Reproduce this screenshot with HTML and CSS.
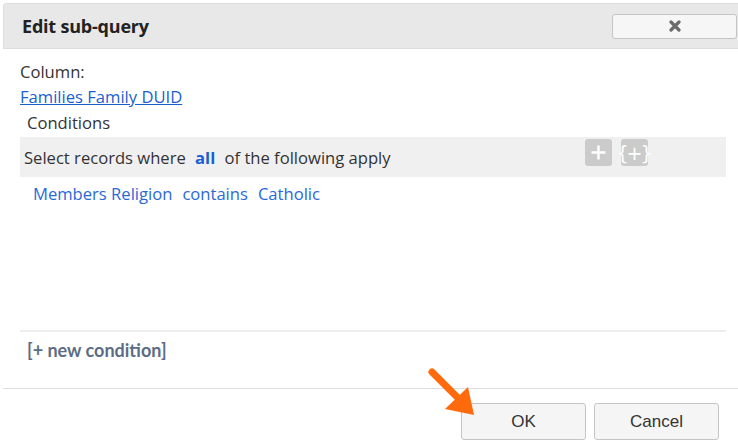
FILE: index.html
```html
<!DOCTYPE html>
<html>
<head>
<meta charset="utf-8">
<link rel="stylesheet" href="styles.css">
</head>
<body>
<div class="dialog">
  <div class="titlebar">
    <span class="title">Edit sub-query</span>
    <button class="close-btn" aria-label="close">
      <svg width="12" height="12" viewBox="0 0 12 12"><path d="M2 2 L10 10 M10 2 L2 10" stroke="#6b6b6b" stroke-width="3.2" stroke-linecap="round"/></svg>
    </button>
  </div>
  <div class="content">
    <div class="label">Column:</div>
    <a class="column-link" href="#">Families Family DUID</a>
    <div class="cond-label">Conditions</div>
    <div class="cond-bar">
      <span class="cond-text">Select records where <b class="all">all</b> of the following apply</span>
      <div class="tools">
        <span class="tool">
          <svg width="27" height="27" viewBox="0 0 27 27"><path d="M13.5 6.5 V20.5 M6.5 13.5 H20.5" stroke="#fff" stroke-width="2.4"/></svg>
        </span>
        <span class="tool tool-group">{+}</span>
      </div>
    </div>
    <div class="cond-row">
      <a href="#">Members Religion</a>
      <a href="#">contains</a>
      <a href="#">Catholic</a>
    </div>
    <div class="new-cond"><span>[+ new condition]</span></div>
  </div>
  <div class="footer">
    <button class="btn">OK</button>
    <button class="btn">Cancel</button>
  </div>
  <svg class="arrow" width="60" height="60" viewBox="0 0 60 60">
    <path d="M4 4 L34 34" stroke="#ff6a0d" stroke-width="7" stroke-linecap="round"/>
    <path d="M46 47 L17 41 L40 19 Z" fill="#ff6a0d"/>
  </svg>
</div>
</body>
</html>
```

FILE: styles.css
```css
html, body {
  margin: 0;
  padding: 0;
  background: #fff;
}
body {
  width: 738px;
  height: 443px;
  overflow: hidden;
  font-family: "Open Sans", "Noto Sans", sans-serif;
}
.dialog {
  position: relative;
  padding: 3px 0 0 3px;
}
.titlebar {
  height: 44px;
  background: #e8e8e8;
  border: 1px solid #dcdcdc;
  border-right: none;
  border-radius: 4px 0 0 0;
  display: flex;
  align-items: center;
  justify-content: space-between;
  padding-left: 18px;
}
.title {
  font-weight: 700;
  font-size: 18px;
  color: #222;
  letter-spacing: -0.2px;
}
.close-btn {
  width: 125px;
  height: 25px;
  margin-right: 1px;
  background: #f6f6f6;
  border: 1px solid #c5c5c5;
  border-radius: 3px;
  display: flex;
  align-items: center;
  justify-content: center;
  padding: 0;
}
.content {
  padding: 0 12px 0 17px;
  height: 339px;
  border-bottom: 1px solid #dedede;
  display: flex;
  flex-direction: column;
  font-size: 16.6px;
  color: #333;
}
.label {
  margin-top: 11px;
  line-height: 24px;
}
.column-link {
  color: #1a5fd0;
  line-height: 26px;
  align-self: flex-start;
}
.cond-label {
  padding-left: 7px;
  line-height: 26px;
}
.cond-bar {
  margin-top: 1px;
  height: 40px;
  background: #f0f0f0;
  display: flex;
  align-items: center;
  justify-content: space-between;
  padding-left: 4px;
}
.all {
  color: #1a5fd0;
  font-weight: 700;
  margin: 0 5px;
}
.tools {
  display: flex;
  gap: 9px;
  margin-right: 78px;
  align-self: flex-start;
  margin-top: 2px;
}
.tool {
  width: 27px;
  height: 27px;
  background: #cbcbcb;
  border-radius: 3px;
  display: flex;
  align-items: center;
  justify-content: center;
}
.tool-group {
  color: #fff;
  font-size: 19px;
  font-family: "DejaVu Sans", sans-serif;
  letter-spacing: -2px;
  padding-right: 2px;
  box-sizing: border-box;
}
.cond-row {
  padding: 5px 0 0 13px;
  display: flex;
  gap: 10px;
  line-height: 24px;
}
.cond-row a {
  color: #2b68d6;
  text-decoration: none;
}
.new-cond {
  margin-top: auto;
  border-top: 2px solid #eeeeee;
  height: 56px;
  padding-left: 7px;
}
.new-cond span {
  display: block;
  margin-top: 7px;
  font-family: Lato, sans-serif;
  font-weight: 700;
  font-size: 18px;
  color: #5d6c86;
}
.footer {
  display: flex;
  justify-content: flex-end;
  gap: 8px;
  padding: 14px 19px 0 0;
}
.btn {
  width: 125px;
  height: 37px;
  background: #f5f5f5;
  border: 1px solid #c5c5c5;
  border-radius: 3px;
  font-family: "Liberation Sans", Arial, sans-serif;
  font-size: 17px;
  color: #333;
}
.arrow {
  position: absolute;
  left: 428px;
  top: 368px;
}
```
